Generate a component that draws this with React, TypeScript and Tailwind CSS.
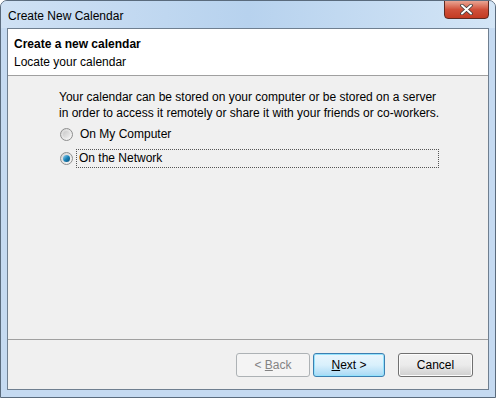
import React from 'react';

function Radio({ checked }: { checked?: boolean }) {
  return (
    <span className="relative flex h-[13px] w-[13px] shrink-0 items-center justify-center rounded-full border border-[#8e8f8f] bg-gradient-to-br from-[#d5d5d5] to-[#f7f7f7]">
      {checked ? (
        <span className="h-[7px] w-[7px] rounded-full bg-gradient-to-br from-[#8fd6f5] via-[#1a84b8] to-[#0b4f7a]" />
      ) : (
        <span className="h-[7px] w-[7px] rounded-full bg-gradient-to-br from-[#c9c9c9] to-[#eeeeee]" />
      )}
    </span>
  );
}

export default function App() {
  return (
    <div
      className="flex h-[398px] w-[496px] flex-col overflow-hidden rounded-t-[7px] border border-[#5a6b7d] bg-[#c5daf1] text-[12px] text-black"
      style={{ fontFamily: '"Liberation Sans", Arial, sans-serif' }}
    >
      {/* title bar */}
      <div className="flex h-[27px] shrink-0 items-start justify-between bg-gradient-to-r from-[#cfe1f4] via-[#b7d2ee] to-[#d3e5f6] pl-[7px] pr-[6px]">
        <span className="mt-[8px] leading-[14px]">Create New Calendar</span>
        <div className="-mt-px flex h-[19px] w-[45px] items-center justify-center rounded-b-[4px] border border-[#5e2a22] bg-gradient-to-b from-[#e8a493] via-[#d0503a] to-[#c33a22]">
          <svg width="13" height="11" viewBox="0 0 13 11">
            <path d="M2 1.5 L11 9.5 M11 1.5 L2 9.5" stroke="#3b3b3b" strokeWidth="3.6" strokeLinecap="round" />
            <path d="M2 1.5 L11 9.5 M11 1.5 L2 9.5" stroke="#ffffff" strokeWidth="2" strokeLinecap="round" />
          </svg>
        </div>
      </div>

      {/* dialog body */}
      <div className="mx-[6px] mb-[7px] flex flex-1 flex-col border border-[#6f7f90] bg-[#f0f0f0]">
        <div className="h-[47px] shrink-0 border-b border-[#a0a0a0] bg-white pl-[6px] pt-[7px]">
          <div className="font-bold leading-[16px]">Create a new calendar</div>
          <div className="mt-[2px] leading-[16px]">Locate your calendar</div>
        </div>

        <div className="flex-1 pl-[51px] pt-[13px]">
          <p className="leading-[16px]">
            Your calendar can be stored on your computer or be stored on a server
            <br />
            in order to access it remotely or share it with your friends or co-workers.
          </p>
          <div className="mt-[3px] flex h-[20px] items-center gap-[5px] pl-[1px]">
            <Radio />
            <span className="px-[2px]">On My Computer</span>
          </div>
          <div className="mt-[4px] flex h-[20px] items-center gap-[3px] pl-[1px]">
            <Radio checked />
            <span className="flex h-[19px] w-[363px] items-center border border-dotted border-[#555] px-[2px]">On the Network</span>
          </div>
        </div>

        <div className="flex h-[50px] shrink-0 items-start justify-end gap-[3px] border-t border-[#a0a0a0] pr-[15px] pt-[13px]">
          <button className="h-[24px] w-[74px] rounded-[3px] border border-[#adb2b5] bg-[#f4f4f4] text-[#838383]">
            &lt; <span className="underline">B</span>ack
          </button>
          <button className="h-[24px] w-[72px] rounded-[3px] border border-[#3c7fb1] bg-gradient-to-b from-[#eaf6fd] via-[#d9f0fc] to-[#a7d9f5] shadow-[inset_0_0_0_1px_#94e2fc]">
            <span className="underline">N</span>ext &gt;
          </button>
          <button className="ml-[10px] h-[24px] w-[75px] rounded-[3px] border border-[#707070] bg-gradient-to-b from-[#f2f2f2] via-[#ebebeb] to-[#cfcfcf] shadow-[inset_0_0_0_1px_#fcfcfc]">
            Cancel
          </button>
        </div>
      </div>
    </div>
  );
}
